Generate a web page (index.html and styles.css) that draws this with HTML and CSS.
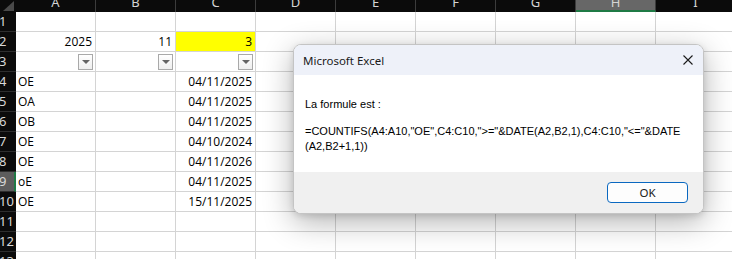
FILE: index.html
```html
<!DOCTYPE html>
<html lang="fr">
<head>
<meta charset="utf-8">
<title>Excel</title>
<link rel="stylesheet" href="styles.css">
</head>
<body>
<div class="sheet">
  <div class="corner"><svg width="16" height="12" viewBox="0 0 16 12"><polygon points="14,1 14,11 3,11" fill="#4a4a4a"/></svg></div>
  <div class="ch"><span>A</span></div>
  <div class="ch"><span>B</span></div>
  <div class="ch"><span>C</span></div>
  <div class="ch"><span>D</span></div>
  <div class="ch"><span>E</span></div>
  <div class="ch"><span>F</span></div>
  <div class="ch"><span>G</span></div>
  <div class="ch sel"><span>H</span></div>
  <div class="ch"><span>I</span></div>

  <div class="rh">1</div><div class="c"></div><div class="c"></div><div class="c"></div><div class="c"></div><div class="c"></div><div class="c"></div><div class="c"></div><div class="c"></div><div class="c"></div>
  <div class="rh">2</div><div class="c r">2025</div><div class="c r">11</div><div class="c r yellow">3</div><div class="c"></div><div class="c"></div><div class="c"></div><div class="c"></div><div class="c"></div><div class="c"></div>
  <div class="rh">3</div><div class="c f"><span class="dd"><span class="tri"></span></span></div><div class="c f"><span class="dd"><span class="tri"></span></span></div><div class="c f"><span class="dd"><span class="tri"></span></span></div><div class="c"></div><div class="c"></div><div class="c"></div><div class="c"></div><div class="c"></div><div class="c"></div>
  <div class="rh">4</div><div class="c">OE</div><div class="c"></div><div class="c r">04/11/2025</div><div class="c"></div><div class="c"></div><div class="c"></div><div class="c"></div><div class="c"></div><div class="c"></div>
  <div class="rh">5</div><div class="c">OA</div><div class="c"></div><div class="c r">04/11/2025</div><div class="c"></div><div class="c"></div><div class="c"></div><div class="c"></div><div class="c"></div><div class="c"></div>
  <div class="rh">6</div><div class="c">OB</div><div class="c"></div><div class="c r">04/11/2025</div><div class="c"></div><div class="c"></div><div class="c"></div><div class="c"></div><div class="c"></div><div class="c"></div>
  <div class="rh">7</div><div class="c">OE</div><div class="c"></div><div class="c r">04/10/2024</div><div class="c"></div><div class="c"></div><div class="c"></div><div class="c"></div><div class="c"></div><div class="c"></div>
  <div class="rh">8</div><div class="c">OE</div><div class="c"></div><div class="c r">04/11/2026</div><div class="c"></div><div class="c"></div><div class="c"></div><div class="c"></div><div class="c"></div><div class="c"></div>
  <div class="rh selr">9</div><div class="c">oE</div><div class="c"></div><div class="c r">04/11/2025</div><div class="c"></div><div class="c"></div><div class="c"></div><div class="c"></div><div class="c"></div><div class="c"></div>
  <div class="rh">10</div><div class="c">OE</div><div class="c"></div><div class="c r">15/11/2025</div><div class="c"></div><div class="c"></div><div class="c"></div><div class="c"></div><div class="c"></div><div class="c"></div>
  <div class="rh">11</div><div class="c"></div><div class="c"></div><div class="c"></div><div class="c"></div><div class="c"></div><div class="c"></div><div class="c"></div><div class="c"></div><div class="c"></div>
  <div class="rh">12</div><div class="c"></div><div class="c"></div><div class="c"></div><div class="c"></div><div class="c"></div><div class="c"></div><div class="c"></div><div class="c"></div><div class="c"></div>
  <div class="rh">13</div><div class="c"></div><div class="c"></div><div class="c"></div><div class="c"></div><div class="c"></div><div class="c"></div><div class="c"></div><div class="c"></div><div class="c"></div>
</div>

<div class="dialog">
  <div class="titlebar">
    <span class="title">Microsoft Excel</span>
    <svg class="close" width="10" height="10" viewBox="0 0 10 10"><path d="M0.5 0.5 L9.5 9.5 M9.5 0.5 L0.5 9.5" stroke="#1b1b1b" stroke-width="1.1" fill="none"/></svg>
  </div>
  <div class="content">
    <p class="msg">La formule est :</p>
    <p class="formula">=COUNTIFS(A4:A10,"OE",C4:C10,"&gt;="&amp;DATE(A2,B2,1),C4:C10,"&lt;="&amp;DATE<br>(A2,B2+1,1))</p>
  </div>
  <div class="footer">
    <button class="ok">OK</button>
  </div>
</div>
</body>
</html>
```
FILE: styles.css
```css
html, body {
  margin: 0;
  padding: 0;
  width: 732px;
  height: 259px;
  overflow: hidden;
  background: #ffffff;
}

.sheet {
  display: grid;
  grid-template-columns: 16px repeat(9, 80px);
  grid-template-rows: 12px;
  grid-auto-rows: 20px;
  width: 736px;
  font-family: "Open Sans", "Noto Sans", sans-serif;
  font-size: 12px;
  color: #000;
}

.corner {
  background: #0b0b0b;
  line-height: 0;
}

.ch {
  background: #0b0b0b;
  color: #d4d4d4;
  border-right: 1px solid #3c3c3c;
  box-sizing: border-box;
  overflow: hidden;
  text-align: center;
  font-family: "Noto Sans", sans-serif;
  font-size: 13px;
  line-height: 4px;
}

.ch.sel {
  background: #676767;
  border-bottom: 2px solid #1f7a45;
}

.rh {
  background: #0b0b0b;
  color: #d8d8d8;
  border-bottom: 1px solid #2e2e2e;
  box-sizing: border-box;
  font-family: "Noto Sans", sans-serif;
  font-size: 13px;
  line-height: 19px;
  text-indent: -1px;
  overflow: hidden;
  white-space: nowrap;
}

.rh.selr {
  background: #5d5d5d;
  border-right: 2px solid #1f7a45;
}

.c {
  border-right: 1px solid #d4d4d4;
  border-bottom: 1px solid #d4d4d4;
  box-sizing: border-box;
  padding: 0 3px 0 2px;
  line-height: 20px;
  white-space: nowrap;
  overflow: hidden;
}

.c.r {
  text-align: right;
}

.c.yellow {
  background: #ffff00;
}

.c.f {
  display: flex;
  align-items: center;
  justify-content: flex-end;
  padding-right: 2px;
}

.dd {
  width: 15px;
  height: 16px;
  box-sizing: border-box;
  border: 1px solid #a9a9a9;
  background: linear-gradient(#ffffff, #eeeeee);
  display: flex;
  align-items: center;
  justify-content: center;
}

.tri {
  width: 0;
  height: 0;
  border-left: 4px solid transparent;
  border-right: 4px solid transparent;
  border-top: 4px solid #636363;
}

.dialog {
  position: absolute;
  left: 293px;
  top: 44px;
  width: 411px;
  height: 170px;
  box-sizing: border-box;
  border: 1px solid #c4c4c4;
  border-radius: 8px;
  overflow: hidden;
  background: #ffffff;
  box-shadow: 0 8px 30px rgba(0, 0, 0, 0.30), 0 2px 6px rgba(0, 0, 0, 0.12);
  display: flex;
  flex-direction: column;
  font-family: "Noto Sans", sans-serif;
}

.titlebar {
  height: 30px;
  background: #eef1f9;
  display: flex;
  align-items: center;
  justify-content: space-between;
  padding: 0 10px 0 9px;
  flex: none;
}

.title {
  font-size: 11.5px;
  color: #1a1a1a;
  margin-top: 1px;
}

.close {
  display: block;
  margin-top: -1px;
}

.content {
  height: 97px;
  flex: none;
  background: #ffffff;
  padding: 22px 11px 0 11px;
  box-sizing: border-box;
  font-family: "Liberation Sans", Arial, sans-serif;
  font-size: 11px;
  line-height: 15px;
  color: #000;
}

.msg {
  margin: 0;
}

.formula {
  margin: 12px 0 0 0;
  white-space: nowrap;
}

.footer {
  flex: 1;
  background: #f0f0f0;
  display: flex;
  justify-content: flex-end;
  align-items: flex-start;
  padding: 10px 15px 0 0;
}

.ok {
  width: 81px;
  height: 21px;
  box-sizing: border-box;
  border: 1px solid #0a68c0;
  border-radius: 4px;
  background: #fdfdfd;
  font-family: "Noto Sans", sans-serif;
  font-size: 11.5px;
  color: #1a1a1a;
  padding: 0;
  line-height: 19px;
}
```
